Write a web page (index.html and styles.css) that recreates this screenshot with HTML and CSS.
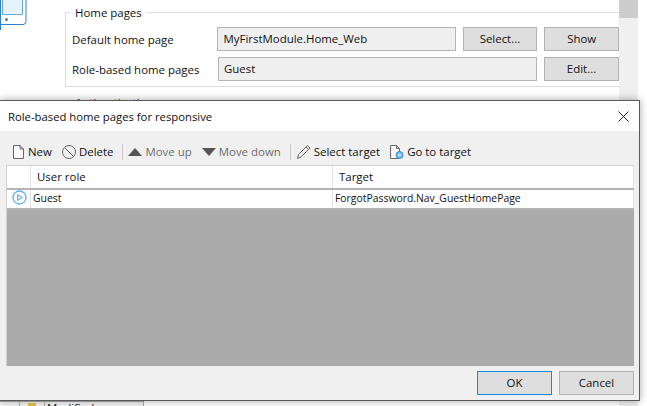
FILE: index.html
```html
<!DOCTYPE html>
<html lang="en">
<head>
  <meta charset="UTF-8">
  <title>Role-based home pages</title>
  <link rel="stylesheet" href="styles.css">
</head>
<body>
  <div class="backdrop">
    <svg class="device" width="27" height="32" viewBox="0 0 27 32">
      <path d="M0.500 -2V30M0.500 24.500H23a3 3 0 0 0 3-3V-2" fill="#fff" stroke="#2f7fd0"/>
      <path d="M2.500 -2V14.500H22.500V-2" fill="#e6f3fb" stroke="#6fa6dc"/>
      <circle cx="6.500" cy="19.500" r="1.500" fill="#2f7fd0"/>
    </svg>
    <div class="main">
      <fieldset class="group">
        <legend>Home pages</legend>
        <div class="row">
          <label>Default home page</label>
          <div class="field field-short">MyFirstModule.Home_Web</div>
          <div class="btn">Select...</div>
          <div class="btn">Show</div>
        </div>
        <div class="row">
          <label>Role-based home pages</label>
          <div class="field">Guest</div>
          <div class="btn">Edit...</div>
        </div>
      </fieldset>
      <fieldset class="group">
        <legend>Authentication</legend>
      </fieldset>
    </div>
    <div class="scrollbar"><div class="thumb"></div></div>
    <div class="statusbar">
      <span class="status-cell status-first"></span>
      <span class="status-cell status-icon"><span class="swatch"></span></span>
      <span class="status-cell status-text">Modified</span>
    </div>
  </div>

  <div class="dialog">
    <div class="titlebar">
      <span>Role-based home pages for responsive</span>
      <svg width="11" height="11" viewBox="0 0 11 11"><path d="M0.500 0.500L10.500 10.500M10.500 0.500L0.500 10.500" stroke="#222" fill="none"/></svg>
    </div>
    <div class="toolbar">
      <div class="tool">
        <svg width="13" height="16" viewBox="0 0 13 16"><path d="M1.500 1.500H8L11.500 5V14.500H1.500ZM8 1.500V5H11.500" fill="#fff" stroke="#666"/></svg>
        New
      </div>
      <div class="tool tool-tight">
        <svg width="16" height="16" viewBox="0 0 16 16"><circle cx="8" cy="8" r="6.500" fill="none" stroke="#666"/><path d="M3.500 3.500L12.500 12.500" stroke="#666" fill="none"/></svg>
        Delete
      </div>
      <div class="sep"></div>
      <div class="tool off">
        <svg width="14" height="8" viewBox="0 0 14 8"><path d="M7 0L14 8H0Z" fill="#555"/></svg>
        Move up
      </div>
      <div class="tool off tool-down">
        <svg width="14" height="8" viewBox="0 0 14 8"><path d="M0 0H14L7 8Z" fill="#555"/></svg>
        Move down
      </div>
      <div class="sep"></div>
      <div class="tool">
        <svg width="15" height="16" viewBox="0 0 15 16"><path d="M1.500 14.500L2.500 10.500L11.500 1.500L14 4L5 13ZM10 3L12.500 5.500" fill="none" stroke="#666"/></svg>
        Select target
      </div>
      <div class="tool">
        <svg width="15" height="16" viewBox="0 0 15 16"><path d="M1.500 1.500H7.500L10.500 4.500V14.500H1.500ZM7.500 1.500V4.500H10.500" fill="#fff" stroke="#666"/><circle cx="10.500" cy="11" r="3.500" fill="#7cc0ea" stroke="#2f8fd6"/><path d="M9 11H12" stroke="#fff"/></svg>
        Go to target
      </div>
    </div>
    <div class="grid">
      <div class="grid-row grid-head">
        <div class="cell cell-mark"></div>
        <div class="cell cell-role">User role</div>
        <div class="cell">Target</div>
      </div>
      <div class="grid-row grid-item">
        <div class="cell cell-mark">
          <svg width="15" height="15" viewBox="0 0 15 15"><circle cx="7.500" cy="7.500" r="6.500" fill="#fff" stroke="#5cb0ee" stroke-width="1.300"/><path d="M5.500 4.500L10.500 7.500L5.500 10.500Z" fill="#cfe7f9" stroke="#5cb0ee"/></svg>
        </div>
        <div class="cell cell-role">Guest</div>
        <div class="cell">ForgotPassword.Nav_GuestHomePage</div>
      </div>
      <div class="grid-empty"></div>
    </div>
    <div class="actions">
      <div class="btn btn-default">OK</div>
      <div class="btn">Cancel</div>
    </div>
  </div>
</body>
</html>
```

FILE: styles.css
```css
html, body {
  margin: 0;
  height: 100%;
  overflow: hidden;
}

body {
  font-family: "Open Sans", "Noto Sans", sans-serif;
  font-size: 11.45px;
  color: #111;
  background: #fff;
}

.backdrop {
  position: relative;
  width: 647px;
  height: 406px;
  display: flex;
}

.device {
  position: absolute;
  left: 0;
  top: 0;
}

.main {
  margin-left: 65px;
  width: 554px;
  padding-top: 5px;
}

.group {
  margin: 0 0 8px;
  padding: 7px 0 5px 6px;
  border: 1px solid #dcdcdc;
  border-right: none;
  min-width: 0;
}

.group legend {
  margin-left: -2px;
  padding: 0 5px;
  line-height: 15px;
}

.row {
  display: flex;
  align-items: center;
  gap: 7px;
  height: 24px;
  margin-bottom: 6px;
}

.row:last-child {
  margin-bottom: 0;
}

.row label {
  width: 139px;
}

.field {
  box-sizing: border-box;
  width: 319px;
  height: 24px;
  line-height: 22px;
  padding-left: 5px;
  background: #efefef;
  border: 1px solid #b4b4b4;
}

.field-short {
  width: 239px;
}

.btn {
  box-sizing: border-box;
  width: 75px;
  height: 24px;
  line-height: 22px;
  text-align: center;
  background: #dedede;
  border: 1px solid #b2b2b2;
}

.scrollbar {
  width: 19px;
  height: 406px;
  background: #f0f0f0;
}

.thumb {
  height: 18px;
  background: #cdcdcd;
}

.statusbar {
  position: absolute;
  left: 0;
  top: 401px;
  height: 5px;
  overflow: hidden;
  display: flex;
  background: #f4f4f4;
  border-top: 1px solid #aaa;
}

.status-cell {
  box-sizing: border-box;
  height: 14px;
  border-right: 1px solid #aaa;
}

.status-first {
  width: 20px;
}

.status-icon {
  width: 25px;
  padding: 1px 0 0 8px;
}

.swatch {
  display: block;
  width: 8px;
  height: 8px;
  background: #e6c34a;
}

.status-text {
  width: 99px;
  padding-left: 2px;
  line-height: 12px;
}

/* dialog sits on top of the page behind it */
.dialog {
  position: absolute;
  left: -1px;
  top: 100px;
  width: 641px;
  height: 301px;
  box-sizing: border-box;
  display: flex;
  flex-direction: column;
  background: #f0f0f0;
  border: 1px solid #5a5a5a;
  box-shadow: 0 0 8px rgba(0, 0, 0, 0.35);
}

.titlebar {
  height: 30px;
  flex: none;
  display: flex;
  align-items: center;
  justify-content: space-between;
  padding: 0 10px 0 8px;
  background: #fff;
  font-size: 11.3px;
}

.toolbar {
  height: 34px;
  flex: none;
  display: flex;
  align-items: center;
  padding: 7px 0 0 12px;
  box-sizing: border-box;
  gap: 9px;
}

.tool {
  display: flex;
  align-items: center;
  gap: 3px;
}

.tool-tight {
  gap: 2px;
}

.tool-down {
  margin-left: 1px;
}

.off {
  color: #6d6d6d;
}

.sep {
  width: 1px;
  height: 16px;
  margin-right: -4px;
  background: #c9c9c9;
}

.grid {
  flex: none;
  height: 200px;
  margin: 0 5px 0 6px;
  display: flex;
  flex-direction: column;
  border-top: 1px solid #d0d0d0;
  border-left: 1px solid #d0d0d0;
}

.grid-row {
  display: flex;
  flex: none;
  background: #fff;
}

.grid-head {
  height: 22px;
  line-height: 21px;
}

.grid-head .cell-role,
.grid-head .cell:last-child {
  padding-left: 6px;
}

.grid-item {
  height: 18px;
  line-height: 16px;
  font-size: 10.4px;
  border-top: 2px solid #b4b4b4;
  border-bottom: 2px solid #b4b4b4;
}

.cell {
  box-sizing: border-box;
  flex: 1;
  padding-left: 2px;
  border-right: 1px solid #e2e2e2;
  overflow: hidden;
  white-space: nowrap;
}

.cell-mark {
  flex: none;
  width: 24px;
  padding: 0 0 0 5px;
}

.cell-mark svg {
  display: block;
}

.cell-role {
  flex: none;
  width: 302px;
}

.grid-empty {
  flex: 1;
  background: #ababab;
}

.actions {
  flex: 1;
  display: flex;
  justify-content: flex-end;
  align-items: center;
  gap: 7px;
  padding: 0 5px 0 0;
}

.btn-default {
  border: 1px solid #0f8bdc;
}
```
